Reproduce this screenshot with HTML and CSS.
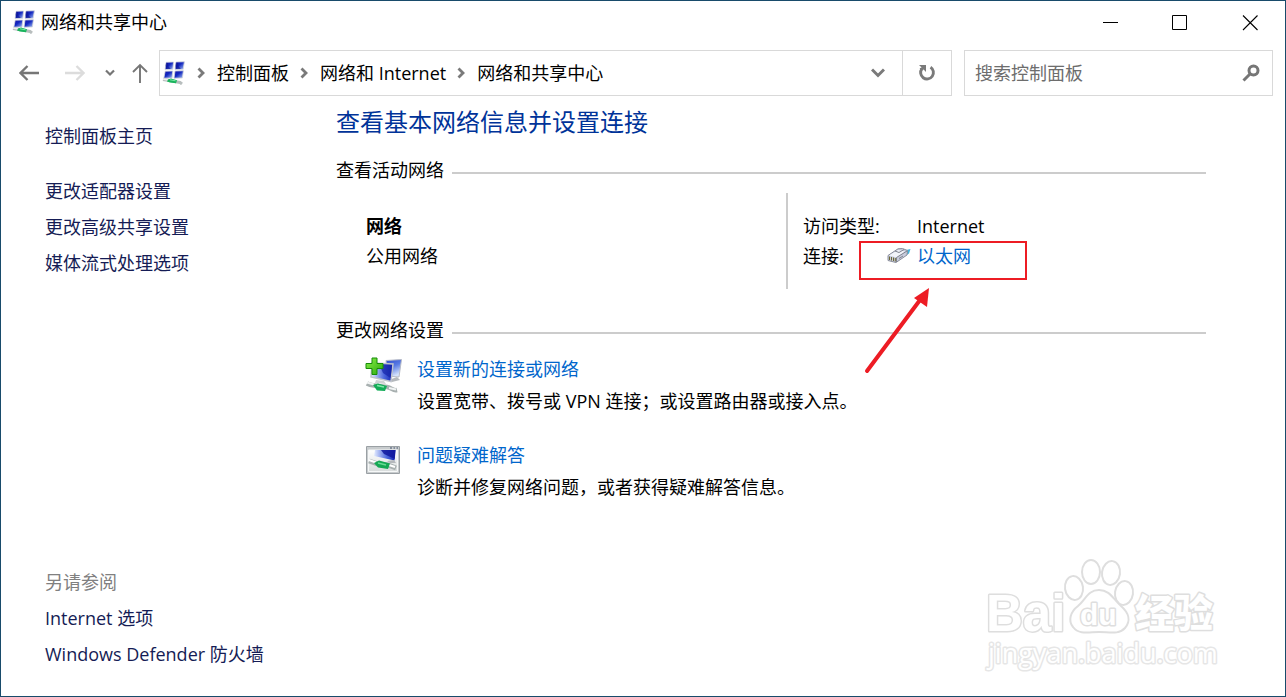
FILE: index.html
```html
<!DOCTYPE html>
<html lang="zh-CN">
<head>
<meta charset="utf-8">
<title>网络和共享中心</title>
<link rel="stylesheet" href="styles.css">
</head>
<body>
<svg class="defs" width="0" height="0" aria-hidden="true">
  <defs>
    <linearGradient id="screen" x1="0" y1="0" x2="1" y2="1">
      <stop offset="0" stop-color="#1414a8"/><stop offset="0.45" stop-color="#1428c0"/><stop offset="1" stop-color="#a8c4f4"/>
    </linearGradient>
    <linearGradient id="screen-light" x1="0" y1="0" x2="1" y2="0">
      <stop offset="0" stop-color="#e4ecff"/><stop offset="0.6" stop-color="#4a66dc"/><stop offset="1" stop-color="#1020b0"/>
    </linearGradient>
    <linearGradient id="screen-back" x1="0" y1="0" x2="0.4" y2="1">
      <stop offset="0" stop-color="#2c48cc"/><stop offset="0.5" stop-color="#5a7ce4"/><stop offset="1" stop-color="#d4e2fc"/>
    </linearGradient>
    <linearGradient id="plus" x1="0" y1="0" x2="1" y2="1">
      <stop offset="0" stop-color="#8af04a"/><stop offset="1" stop-color="#2aa80c"/>
    </linearGradient>
    <linearGradient id="pane" x1="0" y1="0" x2="0" y2="1">
      <stop offset="0" stop-color="#ffffff"/><stop offset="1" stop-color="#d8dcdc"/>
    </linearGradient>
    <symbol id="network" viewBox="0 0 24 24">
      <g stroke="#d4d8dc" stroke-width="0.8">
        <path d="M4.200 1.300 11.600 1 10.800 8.300 3 8.600Z" fill="url(#screen)"/>
        <path d="M14 1 22.400 .8 21.200 8.300 13 8.400Z" fill="url(#screen)"/>
        <path d="M3.200 10.200 10.800 10 10 17 1.800 17.200Z" fill="url(#screen)"/>
        <path d="M13 10 21.400 9.800 20.400 17 12 17.200Z" fill="url(#screen)"/>
      </g>
      <path d="M3.600 5 4 1.800 6 2 6.400 5.600 9 8 4 8ZM13.400 5 14 1.600 16 2 16.600 5.600 19 8 14 8Z" fill="#0c1490" opacity=".6"/>
      <path d="M1 18.600 7 19.600 18 21.400 20 23" stroke="#b8bebe" stroke-width="3" fill="none"/>
      <path d="M1 18 6 19" stroke="#eef0f0" stroke-width="1.400"/>
      <path d="M6 18.600 9 17.600 15 19.200 14 22.200 8 21.600 5 20.400Z" fill="#18b45c"/>
      <path d="M8 18.800 13.600 19.800" stroke="#7ce8a4" stroke-width="1"/>
    </symbol>
    <symbol id="crumb" viewBox="0 0 8 12">
      <path d="M1.500 1.500 6 6 1.500 10.500" fill="none" stroke="#7a7a7a" stroke-width="2.800"/>
    </symbol>
  </defs>
</svg>

<div class="window">
  <header class="titlebar">
    <svg class="app-icon"><use href="#network"/></svg>
    <h1 class="title">网络和共享中心</h1>
    <div class="window-buttons">
      <button class="window-button" aria-label="最小化"><svg width="16" height="16"><path d="M1 8.500H16" stroke="#000"/></svg></button>
      <button class="window-button" aria-label="最大化"><svg width="16" height="16"><path d="M.5 1.500H14.500V15.500H.5Z" fill="none" stroke="#000"/></svg></button>
      <button class="window-button" aria-label="关闭"><svg width="16" height="16"><path d="M1 1.500 15.500 16M15.500 1.500 1 16" stroke="#000" stroke-width="1.100"/></svg></button>
    </div>
  </header>

  <nav class="navbar">
    <div class="history">
      <button class="nav-button" aria-label="后退"><svg width="20" height="16"><path d="M20 8H2M8.500 1 1.500 8 8.500 15" fill="none" stroke="#767676" stroke-width="2.300"/></svg></button>
      <button class="nav-button" aria-label="前进" disabled><svg width="20" height="16"><path d="M0 8H18M11.500 1 18.500 8 11.500 15" fill="none" stroke="#dcdcdc" stroke-width="2.300"/></svg></button>
      <button class="nav-button recent" aria-label="最近的位置"><svg width="10" height="8"><path d="M1 1.500 5 5.500 9 1.500" fill="none" stroke="#767676" stroke-width="2.200"/></svg></button>
      <button class="nav-button up" aria-label="上移"><svg width="16" height="20"><path d="M8 20V2M1 9 8 2 15 9" fill="none" stroke="#767676" stroke-width="1.900"/></svg></button>
    </div>
    <div class="address">
      <svg class="app-icon"><use href="#network"/></svg>
      <svg class="crumb-mark"><use href="#crumb"/></svg>
      <button class="crumb">控制面板</button>
      <svg class="crumb-mark"><use href="#crumb"/></svg>
      <button class="crumb">网络和 Internet</button>
      <svg class="crumb-mark"><use href="#crumb"/></svg>
      <button class="crumb">网络和共享中心</button>
      <button class="address-button history-list" aria-label="以前的位置"><svg width="14" height="10"><path d="M1 1.500 7 7.500 13 1.500" fill="none" stroke="#7a7a7a" stroke-width="3"/></svg></button>
      <button class="address-button refresh" aria-label="刷新"><svg width="18" height="18"><path d="M12.500 3.200A6.400 6.400 0 1 1 4 4.600" fill="none" stroke="#7a7a7a" stroke-width="2.900"/><path d="M1 1H8V8L5.600 5.600 3.500 6.800 1.600 4.400 3.600 3.400Z" fill="#7a7a7a"/></svg></button>
    </div>
    <div class="search">
      <input class="search-box" type="text" aria-label="搜索控制面板" placeholder="搜索控制面板">
      <svg class="search-icon" width="18" height="18"><circle cx="11.500" cy="6.500" r="4.500" fill="none" stroke="#767676" stroke-width="3"/><path d="M8 10 1.500 16.500" stroke="#767676" stroke-width="3"/></svg>
    </div>
  </nav>

  <div class="body">
    <aside class="sidebar">
      <a class="side-link home" href="#">控制面板主页</a>
      <a class="side-link" href="#">更改适配器设置</a>
      <a class="side-link" href="#">更改高级共享设置</a>
      <a class="side-link" href="#">媒体流式处理选项</a>
      <div class="see-also">
        <h2 class="see-also-title">另请参阅</h2>
        <a class="side-link" href="#">Internet 选项</a>
        <a class="side-link" href="#">Windows Defender 防火墙</a>
      </div>
    </aside>

    <main class="main">
      <h2 class="heading">查看基本网络信息并设置连接</h2>

      <h3 class="section-title">查看活动网络</h3>
      <div class="active-network">
        <div class="network-name">
          <strong>网络</strong>
          <span>公用网络</span>
        </div>
        <div class="details">
          <dl class="detail-list">
            <dt>访问类型:</dt>
            <dd>Internet</dd>
            <dt>连接:</dt>
            <dd><a class="link connection" href="#"><svg class="plug" width="24" height="18" viewBox="0 0 24 18">
              <path d="M17 3.500 23.500 2 22 6.500 18 9Z" fill="#42b4dc"/>
              <path d="M1 8.500 11 1.800 15.500 1.500 20.500 3.500 20 8 9 15.500 1 13.500Z" fill="#c8ccdc" stroke="#8a8e9c"/>
              <path d="M2 8.500 11 3 18 4.500 9.500 10.500Z" fill="#f2f4fa"/>
              <path d="M8 4 12 5.500 17 2.500M9.500 10.500V15M9.500 10.500 20 4M12 11.500 16 9" stroke="#808490" fill="none"/>
              <path d="M2.500 9.500V13M4.500 10V13.500M6.500 10.500V14M8.300 11V14.500" stroke="#6c6838"/>
            </svg>以太网</a></dd>
          </dl>
          <div class="callout" aria-hidden="true"></div>
          <svg class="callout-arrow" width="70" height="90" viewBox="0 0 70 90" aria-hidden="true"><path d="M7 84 60 13" stroke="#ed1c24" stroke-width="4" stroke-linecap="round"/><path d="M69 1 67 20 54 11Z" fill="#ed1c24"/></svg>
        </div>
      </div>

      <h3 class="section-title">更改网络设置</h3>
      <div class="tasks">
        <section class="task">
          <svg class="task-icon" viewBox="0 0 38 38">
            <path d="M22 3.500 37.500 2.500 35 20 23 19Z" fill="url(#screen-back)" stroke="#b8bcc8"/>
            <path d="M25 23 33 20 36 23 28 25Z" fill="#b4b8bc"/>
            <path d="M8 6 29 7 27 24.500 7 20Z" fill="url(#screen-light)" stroke="#c0c4cc" stroke-width="1.500"/>
            <path d="M15 7 28 8 26.500 21 19 16Z" fill="#1424a8" opacity=".7"/>
            <path d="M12 23 20 24 22 27 11 26Z" fill="#cfd2d4"/>
            <path d="M8 1H13V6.500H19V11.500H13V17.500H8V11.500H2V6.500H8Z" fill="url(#plus)" stroke="#168c08"/>
            <path d="M3 26.500C7 29 10 28 14 29L23 30C28 31 29 34 33 33" stroke="#a8b0b0" stroke-width="4.500" fill="none"/>
            <path d="M3 25.500 10 27.500M25 31 32 32.500" stroke="#f2f4f4" stroke-width="2"/>
            <path d="M9 28 14 26.500 23 29 21 34 13 33.500Z" fill="#14ac58"/>
            <path d="M13 28.500 20 30" stroke="#80e8a8" stroke-width="1.500"/>
          </svg>
          <div class="task-text">
            <a class="link" href="#">设置新的连接或网络</a>
            <p>设置宽带、拨号或 VPN 连接；或设置路由器或接入点。</p>
          </div>
        </section>
        <section class="task">
          <svg class="task-icon" viewBox="0 0 38 38">
            <path d="M2.500 3.500H35.500V30.500H2.500Z" fill="#c8ccce" stroke="#9aa0a4"/>
            <path d="M4.500 7H33.500V28.500H4.500Z" fill="url(#pane)" stroke="#f6f8f8"/>
            <path d="M11 7H31.500L30.500 17.500 10 13Z" fill="url(#screen-light)"/>
            <path d="M17 7H31.500L30.800 16 20 11Z" fill="#10189c" opacity=".85"/>
            <path d="M26 5H28M29.500 5H31M32.500 5H34" stroke="#40506c"/>
            <path d="M23 18 30 17 32 20 26 20Z" fill="#b4b8bc"/>
            <path d="M5 18 14 21 24 22 32 25" stroke="#a8b0b0" stroke-width="5" fill="none"/>
            <path d="M5 17 12 19.500M25 22 31 24" stroke="#fff" stroke-width="2"/>
            <path d="M10 20 15 17.500 26 20.500 24 26 14 24.500Z" fill="#14a854"/>
            <path d="M14 20 22 22" stroke="#68dc94" stroke-width="1.500"/>
          </svg>
          <div class="task-text">
            <a class="link" href="#">问题疑难解答</a>
            <p>诊断并修复网络问题，或者获得疑难解答信息。</p>
          </div>
        </section>
      </div>
    </main>
  </div>

  <svg class="watermark" width="240" height="125" viewBox="0 0 240 125" aria-hidden="true">
    <ellipse cx="106" cy="11" rx="9" ry="12"/>
    <ellipse cx="126" cy="12" rx="9" ry="12" transform="rotate(8 126 12)"/>
    <ellipse cx="89" cy="27" rx="9" ry="12" transform="rotate(-8 89 27)"/>
    <ellipse cx="139" cy="32" rx="9" ry="12" transform="rotate(8 139 32)"/>
    <path d="M114 29C103 29 101 38 93 45C85 51 83 60 88 66C94 74 104 71 114 71C124 71 134 74 140 67C146 60 144 52 136 45C128 38 125 29 114 29Z"/>
    <text class="watermark-brand" x="1" y="70">Bai</text>
    <text class="watermark-du" x="95" y="64">du</text>
    <text class="watermark-cn" x="150" y="66">经验</text>
    <text class="watermark-url" x="3" y="102">jingyan.baidu.com</text>
  </svg>
</div>
</body>
</html>
```
FILE: styles.css
```css
* {
  box-sizing: border-box;
}

body {
  margin: 0;
  background: #fff;
  color: #000;
  font: 18px/24px "Open Sans", "Noto Sans CJK SC", sans-serif;
}

h1, h2, h3, p, dl, dd {
  margin: 0;
  font-size: inherit;
  font-weight: 400;
}

button {
  display: flex;
  align-items: center;
  justify-content: center;
  padding: 0;
  border: 0;
  background: none;
  color: inherit;
  font: inherit;
}

a {
  text-decoration: none;
}

.defs {
  position: absolute;
}

.window {
  position: relative;
  display: flex;
  flex-direction: column;
  min-height: 100vh;
  border: 1px solid #184b6b;
}

.titlebar {
  display: flex;
  align-items: center;
  height: 42px;
  padding-left: 11px;
}

.app-icon {
  flex: none;
  width: 24px;
  height: 24px;
}

.title {
  margin-left: 5px;
}

.window-buttons {
  display: flex;
  height: 100%;
  margin-left: auto;
}

.window-button {
  width: 70px;
}

.window-button svg {
  overflow: visible;
}

.navbar {
  display: flex;
  height: 53px;
  padding: 7px 12px 0 18px;
}

.history {
  display: flex;
  align-items: center;
  width: 140px;
  gap: 26px;
}

.recent {
  margin-left: -6px;
}

.up {
  margin-left: -9px;
}

.address {
  display: flex;
  flex: 1;
  align-items: center;
  padding-left: 2px;
  border: 1px solid #d9d9d9;
}

.crumb-mark {
  flex: none;
  width: 8px;
  height: 12px;
  margin: 0 12px 0 11px;
}

.address-button {
  width: 49px;
  height: 100%;
}

.history-list {
  margin-left: auto;
}

.refresh {
  border-left: 1px solid #d9d9d9;
}

.search {
  display: flex;
  align-items: center;
  width: 309px;
  margin-left: 12px;
  padding: 0 12px 0 10px;
  border: 1px solid #d9d9d9;
}

.search-box {
  flex: 1;
  min-width: 0;
  padding: 0;
  border: 0;
  outline: 0;
  font: inherit;
}

.search-box::placeholder {
  color: #6d6d6d;
  opacity: 1;
}

.body {
  display: flex;
  flex: 1;
}

.sidebar {
  display: flex;
  flex-direction: column;
  width: 335px;
  padding: 22px 0 24px 44px;
}

.side-link {
  display: block;
  color: #151c55;
  line-height: 36px;
}

.home {
  margin-bottom: 19px;
}

.see-also {
  margin-top: auto;
}

.see-also-title {
  color: #808080;
  line-height: 36px;
}

.main {
  flex: 1;
  padding: 10px 79px 0 0;
}

.heading {
  margin-bottom: 20px;
  color: #003399;
  font-size: 24px;
  line-height: 32px;
}

.section-title {
  display: flex;
  align-items: center;
  gap: 8px;
}

.section-title::after {
  content: "";
  flex: 1;
  height: 2px;
  margin-top: 6px;
  background: #ccc;
}

.active-network {
  display: flex;
  height: 96px;
  margin: 11px 0 29px;
  padding-left: 30px;
  line-height: 30px;
}

.network-name {
  display: flex;
  flex: 1;
  flex-direction: column;
  padding-top: 18px;
}

.network-name strong {
  font-weight: 700;
}

.details {
  position: relative;
  width: 50%;
  padding: 18px 0 0 15px;
  border-left: 2px solid #ccc;
}

.detail-list {
  display: grid;
  grid-template-columns: 114px 1fr;
}

.link {
  color: #0066cc;
}

.connection {
  display: flex;
  align-items: center;
  gap: 6px;
  margin-left: -30px;
}

.callout {
  position: absolute;
  top: 48px;
  left: 71px;
  width: 168px;
  height: 39px;
  border: 2px solid #ed1c24;
}

.callout-arrow {
  position: absolute;
  top: 94px;
  left: 72px;
}

.tasks {
  display: flex;
  flex-direction: column;
  gap: 22px;
  margin-top: 11px;
  padding-left: 28px;
  line-height: 32px;
}

.task {
  display: flex;
  gap: 15px;
}

.task-icon {
  flex: none;
  width: 38px;
  height: 38px;
  margin-top: 4px;
}

.watermark {
  position: absolute;
  right: 60px;
  bottom: 10px;
  overflow: visible;
  fill: #fff;
  stroke: #dedede;
  stroke-width: 2px;
  stroke-linejoin: round;
}

.watermark text {
  paint-order: stroke;
  stroke-width: 3px;
}

.watermark .watermark-brand {
  font: 700 51px "Liberation Sans", sans-serif;
}

.watermark .watermark-du {
  font: 700 30px "Liberation Sans", sans-serif;
}

.watermark .watermark-cn {
  font: 900 39px "Noto Sans CJK SC", sans-serif;
}

.watermark .watermark-url {
  font: 400 27px "Open Sans", sans-serif;
  stroke: #e6e6e6;
}
```
